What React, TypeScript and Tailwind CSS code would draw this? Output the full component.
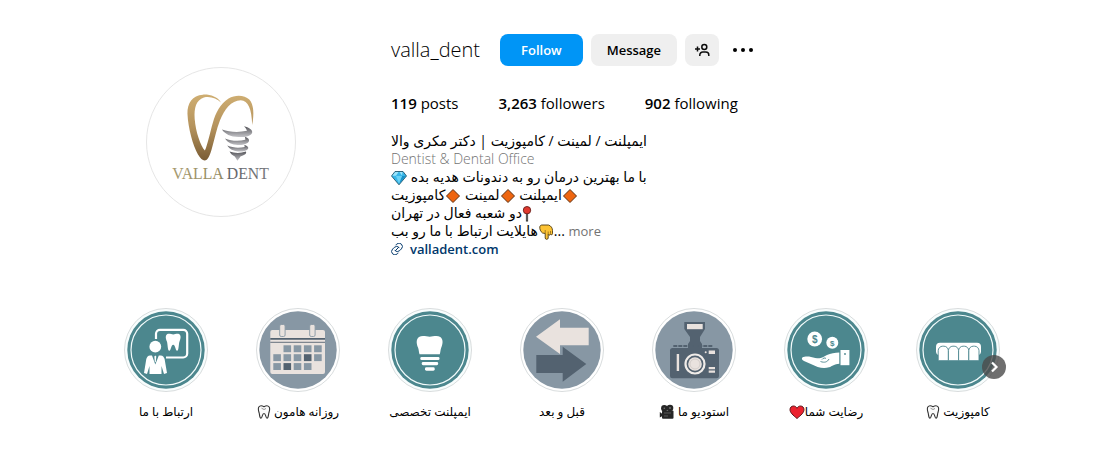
import type { ReactNode } from 'react';

const EMOJI = 'inline-block h-4 w-4 align-text-bottom';

function Logo() {
  return (
    <svg viewBox="18 21 450 450" className="h-full w-full" role="img" aria-label="Valla Dent">
      <defs>
        <linearGradient id="gold" x1="0" y1="0" x2="0" y2="1">
          <stop offset="0" stopColor="#cfae72" />
          <stop offset="0.5" stopColor="#b4925c" />
          <stop offset="1" stopColor="#7a5c34" />
        </linearGradient>
        <linearGradient id="steel" x1="0" y1="0" x2="0" y2="1">
          <stop offset="0" stopColor="#55555a" />
          <stop offset="1" stopColor="#c4c4c8" />
        </linearGradient>
        <linearGradient id="word" x1="0" y1="0" x2="1" y2="0">
          <stop offset="0" stopColor="#a79a70" />
          <stop offset="0.5" stopColor="#958b62" />
          <stop offset="0.56" stopColor="#626368" />
          <stop offset="1" stopColor="#77787c" />
        </linearGradient>
      </defs>
      <path
        fill="url(#gold)"
        d="M243 126C232 108 210 101 188 102C156 104 140 128 141 160C143 205 158 257 173 284C180 296 187 302 193 302C203 302 208 289 214 270C223 240 229 207 240 180C253 148 274 119 303 119C326 120 336 145 338 194C344 162 343 132 329 117C315 103 287 101 266 114C240 130 227 158 218 188C209 219 203 251 194 272C181 258 166 215 163 176C161 142 167 119 191 111C210 106 230 114 243 126Z"
      />
      <g fill="url(#steel)">
        <path d="M246 208C268 216 296 218 322 212C320 206 317 202 313 198C328 202 338 208 338 216C336 227 318 232 296 231C272 230 255 222 246 208Z" />
        <path d="M255 235C274 243 297 244 317 239L316 230C326 233 330 239 328 244C323 253 309 256 294 255C276 254 263 247 255 235Z" />
        <path d="M262 257C279 264 298 265 315 261L314 255C324 257 328 263 325 267C319 274 307 276 294 275C280 274 269 268 262 257Z" />
        <path d="M269 275C283 280 302 281 319 275C322 282 312 288 303 289L293 303L285 290C278 287 272 282 269 275Z" />
      </g>
      <text x="95" y="360" fontSize="48" fill="url(#word)" fontFamily="Liberation Serif, serif">
        VALLA DENT
      </text>
    </svg>
  );
}

function AddPersonIcon() {
  return (
    <svg viewBox="0 0 16 16" className="h-4 w-4" fill="none" stroke="#0c0c0c" strokeWidth="1.5" aria-hidden="true">
      <circle cx="10.3" cy="5" r="2.5" />
      <path d="M5.8 14v-1a3 3 0 0 1 3-3h3a3 3 0 0 1 3 3v1M1 7h5M3.5 4.5v5" />
    </svg>
  );
}

function LinkIcon() {
  return (
    <svg viewBox="0 0 24 24" className="h-3 w-3" fill="none" stroke="#00376b" strokeWidth="2" strokeLinecap="round" aria-hidden="true">
      <path d="m9.7 3.9 1.6-1.6a6.7 6.7 0 0 1 9.5 9.5l-3.4 3.4a6.7 6.7 0 0 1-9.5 0M14.3 20.1l-1.6 1.6a6.7 6.7 0 0 1-9.5-9.5l3.4-3.4a6.7 6.7 0 0 1 9.5 0M9 15l6-6" />
    </svg>
  );
}

function Gem() {
  return (
    <svg viewBox="0 0 16 16" className={EMOJI} role="img" aria-label="💎">
      <path fill="#38b6e8" stroke="#14465c" strokeWidth="0.8" strokeLinejoin="round" d="M4 1.5h8L15.5 6 8 14.8.5 6Z" />
      <path fill="#9be4fa" d="M4.3 2h3.2L5 5.7H1.3ZM8.5 2h3L11 5.5Z" />
      <path fill="#1990c6" d="M11 6h3.7L8.4 13.5Z" />
      <path fill="#6bd3f5" d="M5 6h6l-3 7.5Z" />
    </svg>
  );
}

function Diamond() {
  return (
    <svg viewBox="0 0 16 16" className={EMOJI} role="img" aria-label="🔸">
      <path fill="#ee6510" stroke="#5f3010" strokeWidth="1" d="M8 1.5 14.500 8 8 14.500 1.500 8Z" />
    </svg>
  );
}

function Pin() {
  return (
    <svg viewBox="0 0 10 16" className="inline-block h-4 w-[10px] align-text-bottom" role="img" aria-label="📍">
      <path stroke="#333" strokeWidth="2.2" d="M5 7v8.500" />
      <path stroke="#999" strokeWidth="0.8" d="M5 8v6.500" />
      <circle cx="5" cy="4.2" r="3.7" fill="#e0392f" stroke="#67201c" strokeWidth="0.9" />
    </svg>
  );
}

function PointDown() {
  return (
    <svg viewBox="0 0 16 16" className={EMOJI} role="img" aria-label="👇">
      <path
        fill="#fdc334"
        stroke="#4e3b13"
        strokeWidth="0.9"
        strokeLinejoin="round"
        d="M4 1h6.500c2.500.8 4 3 4 5.500v3.200c0 1.300-1.700 1.300-2 .3-.3 1.500-2 1.500-2.300.4V14c0 1.800-3 1.800-3 0V9.500L4.500 9C2.500 7.500 1.500 5 1.800 2.800 2 1.500 3 1 4 1Z"
      />
      <path fill="none" stroke="#7b5b17" strokeWidth="0.7" d="M10.2 10.5V7.5M12.5 9.800V7M7.200 9.500V6" />
    </svg>
  );
}

function ToothEmoji() {
  return (
    <svg viewBox="0 0 14 16" className="inline-block h-4 w-[14px] align-text-bottom" role="img" aria-label="🦷">
      <path
        fill="#fbfbfb"
        stroke="#333"
        strokeWidth="1.1"
        strokeLinejoin="round"
        d="M1.8 3C3 1.3 5.3 1.7 7 2.7 8.7 1.7 11 1.3 12.2 3c1.2 2-.1 4.7-.5 6.5-.3 1.7-.3 4.500-1.7 4.700C8.6 14.3 9 9.5 7 9.5S5.4 14.3 4 14.2C2.6 14 2.6 11.2 2.3 9.5 1.9 7.7.6 5 1.8 3Z"
      />
      <path fill="none" stroke="#777" strokeWidth="0.8" d="M4.5 4.2 7 5.5l2-1" />
    </svg>
  );
}

function CameraEmoji() {
  return (
    <svg viewBox="0 0 16 16" className={EMOJI} role="img" aria-label="🎥">
      <g fill="#262626">
        <circle cx="5.3" cy="4.3" r="3.2" />
        <circle cx="11" cy="4" r="3.3" />
        <rect x="3" y="6.5" width="11.5" height="8.3" rx="1" />
        <path d="m3.500 10-2.700-2v5.500l2.700-1.500Z" />
      </g>
      <circle cx="5.3" cy="4.3" r="0.8" fill="#777" />
      <circle cx="11" cy="4" r="0.9" fill="#777" />
      <path stroke="#666" strokeWidth="0.8" d="M5 9h7M5 12h4" />
    </svg>
  );
}

function Heart() {
  return (
    <svg viewBox="0 0 16 16" className={EMOJI} role="img" aria-label="❤️">
      <path
        fill="#ec2330"
        stroke="#5d1518"
        strokeWidth="1"
        d="M8 14.5C4 11.2 1 8.6 1 5.6 1 3.4 2.6 2 4.5 2 6 2 7.3 2.9 8 4.3 8.7 2.9 10 2 11.5 2 13.4 2 15 3.4 15 5.6 15 8.6 12 11.2 8 14.5Z"
      />
    </svg>
  );
}

function Cover({ fill, ring, children }: { fill: string; ring?: boolean; children: ReactNode }) {
  return (
    <svg viewBox="0 0 84 84" className="h-[84px] w-[84px]" aria-hidden="true">
      <circle cx="42" cy="42" r="41.5" fill={ring ? '#f8fdfd' : '#fff'} stroke="#d4d8d9" strokeWidth="0.9" />
      <circle cx="42" cy="42" r="38.7" fill={fill} />
      {ring && <circle cx="42" cy="42" r="35" fill="none" stroke="#f2fbfb" strokeWidth="1.2" />}
      {children}
    </svg>
  );
}

const TEAL = '#4c878e';
const SLATE = '#8797a4';
const DARK = '#536270';
const CREAM = '#e9e2de';

function ContactCover() {
  return (
    <Cover fill={TEAL} ring>
      <path fill="none" stroke="#fff" strokeWidth="2.2" d="M32 31v-5.200a4 4 0 0 1 4-4h23.200a4 4 0 0 1 4 4v19.700a4 4 0 0 1-4 4H42" />
      <path
        fill="#fff"
        d="M43 26.3c2-1.300 4.300.2 6.200.2s4.200-1.500 6.200-.2c2 1.800 1.100 4.700.1 7.100-.9 2.500-.6 9.200-2.400 9.300-1.800 0-1.600-6-3.900-6s-2 6-3.900 6c-1.800-.1-1.500-6.800-2.400-9.300-1-2.400-1.900-5.300.1-7.100Z"
      />
      <circle cx="31.3" cy="38.7" r="5.9" fill="#fff" />
      <path fill="#fff" d="M26 47.5h2l3.300 9 3.500-9h2c2 .2 3.200 1.500 3.800 3.500L43 65l-3 1-2.500-8v8H25.500v-8L23 66l-3-1 2.300-14c.6-2 1.700-3.300 3.700-3.500Z" />
      <path fill="#fff" d="m30.300 48.5 1-1 1 1-.5 5-.5 1-.5-1Z" />
    </Cover>
  );
}

function CalendarCover() {
  const cells = [
    [1, 0], [2, 0], [3, 0], [4, 0],
    [0, 1], [1, 1], [2, 1], [3, 1], [4, 1],
    [0, 2], [1, 2], [2, 2], [3, 2],
  ];
  return (
    <Cover fill={SLATE}>
      <rect x="14.3" y="22" width="54.7" height="44" rx="2" fill={CREAM} />
      <path stroke={DARK} strokeWidth="1.6" d="M14.3 30.9H69" />
      <path stroke={DARK} strokeWidth="0.9" d="M14.3 34.3H69" />
      <g fill={CREAM} stroke={SLATE} strokeWidth="0.9">
        <rect x="23.7" y="16.5" width="5.4" height="12" rx="1.5" />
        <rect x="53.7" y="16.5" width="5.4" height="12" rx="1.5" />
      </g>
      {cells.map(([col, row]) => (
        <rect
          key={`${col}-${row}`}
          x={17.3 + col * 10.2}
          y={37.3 + row * 8.9}
          width="7.6"
          height="6.9"
          fill={(col === 3 && row === 1) || (col === 1 && row === 2) ? DARK : SLATE}
        />
      ))}
    </Cover>
  );
}

function ImplantCover() {
  return (
    <Cover fill={TEAL} ring>
      <path fill="#fff" d="M31 29c3.300-2 7.500-.3 10.700-.3S49 27 52.300 29c3.300 2.600 2.400 7 1 10.500-.8 2-.8 4.500-1.500 6.800H31.500c-.7-2.300-.7-4.800-1.500-6.800-1.400-3.500-2.300-7.900 1-10.500Z" />
      <rect x="32.3" y="49" width="19.2" height="3" rx="1.2" fill="#fff" />
      <rect x="33.7" y="54" width="16.5" height="3.2" rx="1.4" fill="#fff" />
      <rect x="37" y="59.2" width="9.7" height="3.5" rx="1.4" fill="#fff" />
    </Cover>
  );
}

function ArrowsCover() {
  return (
    <Cover fill={SLATE}>
      <path fill={DARK} d="M16.3 47h26.400v-8.300L66.300 56 42.700 73.700V65H16.300Z" />
      <path fill={CREAM} d="M16 28.7 40 11.300v8.400h28.700v17.600H40V46Z" />
    </Cover>
  );
}

function CameraCover() {
  return (
    <Cover fill={SLATE}>
      <path fill={DARK} d="M32.3 14H53v7l-5 8v4l2 3v5H36v-5l2-3v-4l-5.700-8Z" />
      <rect x="35" y="16" width="15.7" height="5.2" fill={CREAM} />
      <path stroke={DARK} strokeWidth="2" strokeDasharray="4 1" d="M21.3 38h39.400" />
      <rect x="18" y="40" width="49" height="30.3" rx="2.5" fill={DARK} />
      <rect x="24.7" y="46" width="2.4" height="17" fill={CREAM} />
      <circle cx="43" cy="56" r="9.5" fill={DARK} stroke="#f0ece9" strokeWidth="2.2" />
      <circle cx="43" cy="56" r="6.8" fill={CREAM} />
      <circle cx="43" cy="56" r="5" fill="none" stroke="#c9c3c0" strokeWidth="0.7" />
      <circle cx="53.7" cy="44.3" r="1" fill={CREAM} />
      <path fill={CREAM} d="M56.7 42.500H63V46h-6.300ZM56.700 59H63v2.300h-6.300ZM56.700 62.500H63v2.300h-6.300Z" />
    </Cover>
  );
}

function HandCover() {
  return (
    <Cover fill={TEAL} ring>
      <g fill="#fff">
        <circle cx="30.7" cy="31" r="7.4" />
        <circle cx="48.3" cy="34.8" r="6" />
        <path d="M18.300 49.500c2.500-1.300 6-1 8.700-.6 3 .6 5.500 1.400 8 1.400 3.500.2 5-2 8-3.200 3.500-1.600 8-2.600 12.300-2.600v11.200c-5 .3-7 2.500-10.300 3.600-3.500 1.200-7.500.9-11.300-.3L20 53c-1.700-.8-2.700-2.300-1.700-3.500Z" />
        <path d="M56.500 42h8.900v15.200h-8.900Z" />
      </g>
      <path fill="none" stroke={TEAL} strokeWidth="0.9" d="M36.500 53.500c4 1.500 7 .5 8.500-2.500M38 51.500c1-1.500 3-2 4-1" />
      <circle cx="61" cy="46" r="0.9" fill={TEAL} />
      <g fill={TEAL} fontFamily="Liberation Sans, sans-serif" fontWeight="700" textAnchor="middle">
        <text x="30.7" y="34.5" fontSize="10">$</text>
        <text x="48.3" y="37.6" fontSize="8">$</text>
      </g>
    </Cover>
  );
}

function TeethCover() {
  return (
    <Cover fill={TEAL} ring>
      <rect x="20" y="34.7" width="45" height="12.5" rx="4" fill="#fff" />
      <g fill="#fff" stroke={TEAL} strokeWidth="0.9">
        {[22.2, 32.4, 42.6, 52.8].map((x) => (
          <path key={x} d={`M${x} 52.7v-10a4.5 4.5 0 0 1 4.5-4.5h1.2a4.5 4.5 0 0 1 4.5 4.5v10Z`} />
        ))}
      </g>
    </Cover>
  );
}

const highlights: { id: string; Picture: () => ReactNode; label: ReactNode }[] = [
  { id: 'contact', Picture: ContactCover, label: 'ارتباط با ما' },
  { id: 'daily', Picture: CalendarCover, label: <>روزانه هامون <ToothEmoji /></> },
  { id: 'implant', Picture: ImplantCover, label: 'ایمپلنت تخصصی' },
  { id: 'before-after', Picture: ArrowsCover, label: 'قبل و بعد' },
  { id: 'studio', Picture: CameraCover, label: <>استودیو ما <CameraEmoji /></> },
  { id: 'reviews', Picture: HandCover, label: <>رضایت شما<Heart /></> },
  { id: 'composite', Picture: TeethCover, label: <>کامپوزیت <ToothEmoji /></> },
];

const stats = [
  ['119', 'posts'],
  ['3,263', 'followers'],
  ['902', 'following'],
];

export default function App() {
  return (
    <main className="bg-white pt-[34px] pr-[70px] pb-12 pl-[100px] font-['Open_Sans','DejaVu_Sans',sans-serif] text-sm text-black">
      <header className="flex">
        <div className="w-[291px] shrink-0 pt-[33px] pl-[46px]">
          <div className="h-[150px] w-[150px] overflow-hidden rounded-full border border-[#e6e6e6]">
            <Logo />
          </div>
        </div>
        <section className="min-w-0 flex-1">
          <div className="flex items-center gap-2">
            <h1 className="mr-3 text-xl leading-8 font-[350]">valla_dent</h1>
            <button type="button" className="h-8 rounded-lg bg-[#0095f6] px-[21px] text-[13px] font-semibold text-white">
              Follow
            </button>
            <button type="button" className="h-8 rounded-lg bg-[#efefef] px-4 text-[13px] font-semibold">
              Message
            </button>
            <button type="button" aria-label="Similar accounts" className="flex h-8 w-[34px] items-center justify-center rounded-lg bg-[#efefef]">
              <AddPersonIcon />
            </button>
            <button type="button" aria-label="Options" className="flex h-8 w-8 items-center justify-center">
              <svg viewBox="0 0 20 4" className="h-1 w-5" aria-hidden="true">
                <circle cx="2" cy="2" r="2" />
                <circle cx="10" cy="2" r="2" />
                <circle cx="18" cy="2" r="2" />
              </svg>
            </button>
          </div>
          <ul className="mt-[27px] flex gap-10 text-[15px] leading-5">
            {stats.map(([count, name]) => (
              <li key={name}>
                <span className="font-semibold">{count}</span> {name}
              </li>
            ))}
          </ul>
          <div className="mt-[19px] leading-[18px]">
            <h2 dir="rtl" className="text-left font-medium">ایمپلنت / لمینت / کامپوزیت | دکتر مکری والا</h2>
            <p className="font-[350] text-[#737373]">Dentist &amp; Dental Office</p>
            <p dir="rtl" className="text-left">با ما بهترین درمان رو به دندونات هدیه بده <Gem /></p>
            <p dir="rtl" className="text-left">
              <Diamond />ایمپلنت <Diamond />لمینت <Diamond />کامپوزیت
            </p>
            <p dir="rtl" className="text-left"><Pin />دو شعبه فعال در تهران</p>
            <p>
              <span dir="rtl">هایلایت ارتباط با ما رو بب</span>
              <PointDown />... <button type="button" className="text-[13px] text-[#737373]">more</button>
            </p>
            <a href="https://valladent.com" className="flex items-center gap-[7px] text-[13px] font-semibold text-[#00376b]">
              <LinkIcon />
              valladent.com
            </a>
          </div>
        </section>
      </header>
      <section aria-label="Highlights" className="relative mt-[50px]">
        <ul className="grid grid-cols-7">
          {highlights.map(({ id, Picture, label }) => (
            <li key={id}>
              <button type="button" className="flex w-full flex-col items-center gap-3">
                <Picture />
                <span dir="rtl" className="text-xs leading-4 whitespace-nowrap">{label}</span>
              </button>
            </li>
          ))}
        </ul>
        <button
          type="button"
          aria-label="Next"
          className="absolute top-[47px] right-[18px] flex h-6 w-6 items-center justify-center rounded-full bg-[#4b4b4b]/80"
        >
          <svg viewBox="0 0 12 12" className="h-3 w-3" fill="none" stroke="#fff" strokeWidth="2.2" aria-hidden="true">
            <path d="m4 1.5 4.500 4.500L4 10.500" />
          </svg>
        </button>
      </section>
    </main>
  );
}
